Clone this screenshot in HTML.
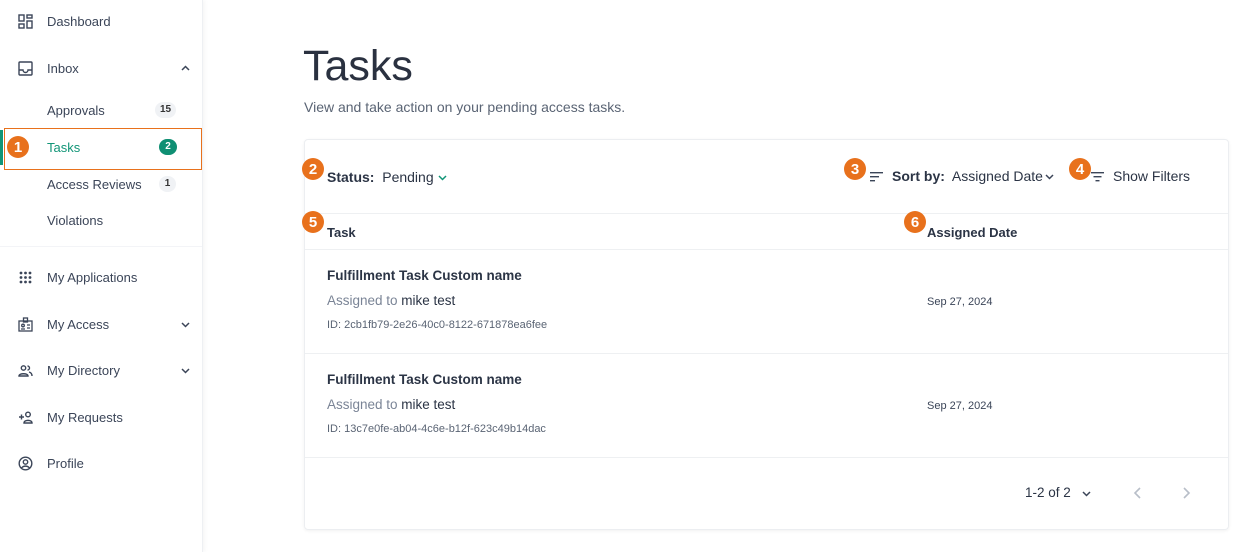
<!DOCTYPE html>
<html><head><style>
*{box-sizing:border-box;margin:0;padding:0}
body{width:1253px;height:552px;overflow:hidden;background:#fff;font-family:"Liberation Sans",sans-serif;color:#2b3445;position:relative}
.side{position:absolute;left:0;top:0;width:203px;height:552px;border-right:1px solid #eef0f3;box-shadow:2px 0 4px rgba(0,0,0,.04)}
.it{position:absolute;left:47px;font-size:13px;color:#3b4558;line-height:16px}
.ic{position:absolute;left:18px;width:15px;height:15px}
.bd{position:absolute;font-size:10px;font-weight:bold;background:#f0f2f5;border-radius:9px;height:16px;line-height:16px;text-align:center;color:#333}
.oc{position:absolute;width:22px;height:22px;border-radius:50%;background:#e8711c;color:#fff;font-weight:bold;font-size:15px;display:flex;align-items:center;justify-content:center;line-height:1}
.chev{position:absolute}
.card{position:absolute;left:304px;top:139px;width:925px;height:391px;border:1px solid #eceef1;border-radius:4px;box-shadow:0 1px 3px rgba(0,0,0,.06)}
.hr{position:absolute;left:0;right:0;height:1px;background:#eef0f2}
.t{position:absolute;white-space:nowrap}
</style></head><body>
<div class="side">
<svg class="ic" style="top:14px" viewBox="0 0 15 15" fill="none" stroke="#3b4558" stroke-width="1.4"><rect x="1" y="1" width="5" height="6"/><rect x="9" y="1" width="5" height="3"/><rect x="1" y="10" width="5" height="4"/><rect x="9" y="7" width="5" height="7"/></svg>
<div class="it" style="top:14px">Dashboard</div>
<svg class="ic" style="top:61px" viewBox="0 0 15 15" fill="none" stroke="#3b4558" stroke-width="1.4"><rect x="1" y="1" width="13" height="13" rx="1"/><path d="M1 9h4a2.5 2.5 0 0 0 5 0h4"/></svg>
<div class="it" style="top:61px">Inbox</div>
<svg class="chev" style="left:181px;top:65px" width="9" height="6" fill="none" stroke="#3b4558" stroke-width="1.5"><path d="M1 5l3.5-3.5L8 5"/></svg>
<div class="it" style="top:103px">Approvals</div>
<div class="bd" style="left:155px;top:102px;width:21px">15</div>
<div style="position:absolute;left:0;top:130px;width:3px;height:35px;background:#119577"></div>
<div style="position:absolute;left:4px;top:128px;width:198px;height:42px;border:1px solid #e8711c"></div>
<div class="oc" style="left:7px;top:136px">1</div>
<div class="it" style="top:140px;color:#119577">Tasks</div>
<div class="bd" style="left:159px;top:139px;width:18px;background:#0f8f73;color:#fff">2</div>
<div class="it" style="top:177px">Access Reviews</div>
<div class="bd" style="left:159px;top:176px;width:17px">1</div>
<div class="it" style="top:213px">Violations</div>
<div style="position:absolute;left:0;right:0;top:246px;height:1px;background:#f3f4f7"></div>
<svg class="ic" style="top:270px" viewBox="0 0 15 15" fill="#3b4558"><circle cx="3" cy="3" r="1.4"/><circle cx="7.5" cy="3" r="1.4"/><circle cx="12" cy="3" r="1.4"/><circle cx="3" cy="7.5" r="1.4"/><circle cx="7.5" cy="7.5" r="1.4"/><circle cx="12" cy="7.5" r="1.4"/><circle cx="3" cy="12" r="1.4"/><circle cx="7.5" cy="12" r="1.4"/><circle cx="12" cy="12" r="1.4"/></svg>
<div class="it" style="top:270px">My Applications</div>
<svg class="ic" style="top:317px" viewBox="0 0 15 15" fill="none" stroke="#3b4558" stroke-width="1.3"><rect x="1" y="4" width="13" height="10"/><rect x="5.5" y="1" width="4" height="4"/><circle cx="5" cy="8.5" r="1.3"/><path d="M9 8h3M9 11h3M3 12h4"/></svg>
<div class="it" style="top:317px">My Access</div>
<svg class="chev" style="left:181px;top:322px" width="9" height="6" fill="none" stroke="#3b4558" stroke-width="1.5"><path d="M1 1l3.5 3.5L8 1"/></svg>
<svg class="ic" style="top:363px" viewBox="0 0 15 15" fill="none" stroke="#3b4558" stroke-width="1.4"><circle cx="5.5" cy="5" r="2.2"/><path d="M1 13c0-3 9-3 9 0z"/><path d="M9.5 3a2 2 0 0 1 0 4M11 9c2 .5 3 2 3 4"/></svg>
<div class="it" style="top:363px">My Directory</div>
<svg class="chev" style="left:181px;top:368px" width="9" height="6" fill="none" stroke="#3b4558" stroke-width="1.5"><path d="M1 1l3.5 3.5L8 1"/></svg>
<svg class="ic" style="top:410px" viewBox="0 0 15 15" fill="none" stroke="#3b4558" stroke-width="1.4"><path d="M1 7h5M3.5 4.5v5"/><circle cx="10" cy="4.5" r="2.3"/><path d="M6 13c0-3.5 8-3.5 8 0z"/></svg>
<div class="it" style="top:410px">My Requests</div>
<svg class="ic" style="top:456px" viewBox="0 0 15 15" fill="none" stroke="#3b4558" stroke-width="1.4"><circle cx="7.5" cy="7.5" r="6.3"/><circle cx="7.5" cy="6" r="2.2"/><path d="M3.5 12c2-2.5 6-2.5 8 0"/></svg>
<div class="it" style="top:456px">Profile</div>
</div>

<div class="t" style="left:303px;top:42px;font-size:43px;font-weight:300;color:#2a3140">Tasks</div>
<div class="t" style="left:304px;top:99px;font-size:14px;color:#5a6474">View and take action on your pending access tasks.</div>

<div class="card">
<div class="oc" style="left:-3px;top:18px">2</div>
<div class="t" style="left:22px;top:29px;font-size:14px"><b>Status:</b>&nbsp; Pending</div>
<svg class="chev" style="left:133px;top:35px" width="9" height="6" fill="none" stroke="#119577" stroke-width="1.5"><path d="M1 1l3.5 3.5L8 1"/></svg>
<div class="oc" style="left:539px;top:18px">3</div>
<svg style="position:absolute;left:565px;top:32px" width="13" height="10" fill="#3b4558"><rect y="0" width="13" height="1.4"/><rect y="4" width="9" height="1.4"/><rect y="8" width="5" height="1.4"/></svg>
<div class="t" style="left:587px;top:28px;font-size:14px"><b>Sort by:</b>&nbsp; Assigned Date</div>
<svg class="chev" style="left:740px;top:34px" width="9" height="6" fill="none" stroke="#3b4558" stroke-width="1.5"><path d="M1 1l3.5 3.5L8 1"/></svg>
<div class="oc" style="left:764px;top:18px">4</div>
<svg style="position:absolute;left:786px;top:32px" width="13" height="10" fill="#3b4558"><rect y="0" width="13" height="1.4"/><rect x="2.5" y="4" width="8" height="1.4"/><rect x="4.5" y="8" width="4" height="1.4"/></svg>
<div class="t" style="left:808px;top:28px;font-size:14px">Show Filters</div>
<div class="hr" style="top:73px"></div>
<div class="oc" style="left:-3px;top:71px">5</div>
<div class="t" style="left:22px;top:85px;font-size:13px;font-weight:bold">Task</div>
<div class="oc" style="left:599px;top:71px">6</div>
<div class="t" style="left:622px;top:85px;font-size:13px;font-weight:bold">Assigned Date</div>
<div class="hr" style="top:109px"></div>

<div class="t" style="left:22px;top:128px;font-size:13.5px;font-weight:bold">Fulfillment Task Custom name</div>
<div class="t" style="left:22px;top:153px;font-size:13.5px;color:#7a8496">Assigned to <span style="color:#2b3445">mike test</span></div>
<div class="t" style="left:22px;top:179px;font-size:11px;color:#5a6474">ID: 2cb1fb79-2e26-40c0-8122-671878ea6fee</div>
<div class="t" style="left:622px;top:156px;font-size:11px;color:#3b4558">Sep 27, 2024</div>
<div class="hr" style="top:213px"></div>

<div class="t" style="left:22px;top:232px;font-size:13.5px;font-weight:bold">Fulfillment Task Custom name</div>
<div class="t" style="left:22px;top:257px;font-size:13.5px;color:#7a8496">Assigned to <span style="color:#2b3445">mike test</span></div>
<div class="t" style="left:22px;top:283px;font-size:11px;color:#5a6474">ID: 13c7e0fe-ab04-4c6e-b12f-623c49b14dac</div>
<div class="t" style="left:622px;top:260px;font-size:11px;color:#3b4558">Sep 27, 2024</div>
<div class="hr" style="top:317px"></div>

<div class="t" style="left:720px;top:345px;font-size:13.5px">1-2 of 2</div>
<svg class="chev" style="left:777px;top:351px" width="9" height="6" fill="none" stroke="#3b4558" stroke-width="1.5"><path d="M1 1l3.5 3.5L8 1"/></svg>
<svg style="position:absolute;left:828px;top:347px" width="10" height="12" fill="none" stroke="#b8bec8" stroke-width="1.6"><path d="M7 1L2 6l5 5"/></svg>
<svg style="position:absolute;left:876px;top:347px" width="10" height="12" fill="none" stroke="#b8bec8" stroke-width="1.6"><path d="M3 1l5 5-5 5"/></svg>
</div>
</body></html>
